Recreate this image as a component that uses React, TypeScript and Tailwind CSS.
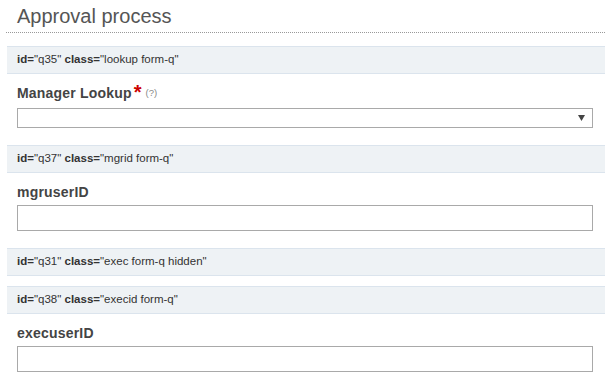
const font = "font-['Liberation_Sans',Arial,sans-serif]";

function InfoBar({ id, cls }: { id: string; cls: string }) {
  return (
    <div className="h-[28px] flex items-center border-y border-[#dbe4ed] bg-[#eef2f5] pl-[10px] text-[11.5px] text-[#333] whitespace-pre">
      <b>id=</b>"{id}" <b>class=</b>"{cls}"
    </div>
  );
}

function Field({ label, required, help, select }: { label: string; required?: boolean; help?: boolean; select?: boolean }) {
  return (
    <div className="pl-[10px] pr-[12px] pb-[17px]">
      <div className={`flex items-end h-[29px] pt-[9px] ${required ? "mb-[5px]" : "mb-[3px]"}`}>
        <span className="text-[14px] font-bold text-[#444] leading-[20px] tracking-[0.2px]">{label}</span>
        {required && <span className="text-[#cc0000] text-[20px] font-bold leading-[20px] self-start mt-[-1px] ml-[2px]">*</span>}
        {help && <span className="text-[9.5px] text-[#888] self-start mt-[3px] ml-[4px]">(?)</span>}
      </div>
      {select ? (
        <div className="h-[20px] border border-[#a9a9a9] bg-white flex items-center justify-end pr-[7px]">
          <svg width="7" height="6" viewBox="0 0 7 6">
            <path d="M0 0H7L3.5 6Z" fill="#444" />
          </svg>
        </div>
      ) : (
        <div className="h-[26px] border border-[#a9a9a9] bg-white" />
      )}
    </div>
  );
}

export default function App() {
  return (
    <div className={`${font} w-[605px] h-[373px] overflow-hidden bg-white pl-[7px]`}>
      <div className="ml-[-1px] pl-[11px] pt-[5px] pb-[5px] border-b border-dotted border-[#999]">
        <h1 className="text-[20px] leading-[22px] text-[#555]">Approval process</h1>
      </div>
      <div className="mt-[13px]">
        <InfoBar id="q35" cls="lookup form-q" />
        <Field label="Manager Lookup" required help select />
        <InfoBar id="q37" cls="mgrid form-q" />
        <Field label="mgruserID" />
        <InfoBar id="q31" cls="exec form-q hidden" />
        <div className="h-[10px]" />
        <InfoBar id="q38" cls="execid form-q" />
        <Field label="execuserID" />
      </div>
    </div>
  );
}
